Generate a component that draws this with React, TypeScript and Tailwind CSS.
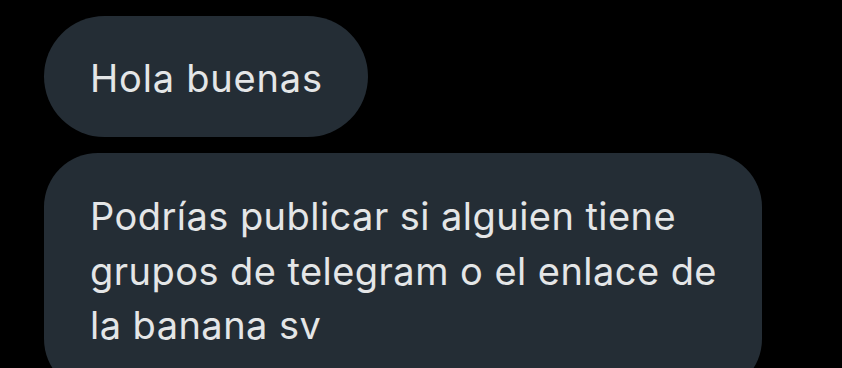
export default function App() {
  return (
    <div className="w-[842px] h-[368px] overflow-hidden bg-black font-['Inter',sans-serif]">
      <div className="flex flex-col items-start gap-4 pl-[44px] pt-4">
        <div className="rounded-full bg-[#242d35] pl-[46px] pr-[45px] pt-[35px] pb-[32px] text-[38px] leading-[54px] tracking-[0.8px] text-[#e4e6e7]">
          Hola buenas
        </div>
        <div className="w-[718px] whitespace-nowrap rounded-[54px] bg-[#242d35] pl-[46px] pr-[30px] pt-[36px] pb-10 text-[38px] leading-[54.5px] tracking-[0.45px] text-[#e4e6e7]">
          Podrías publicar si alguien tiene
          <br />
          grupos de telegram o el enlace de
          <br />
          la banana sv
        </div>
      </div>
    </div>
  );
}
